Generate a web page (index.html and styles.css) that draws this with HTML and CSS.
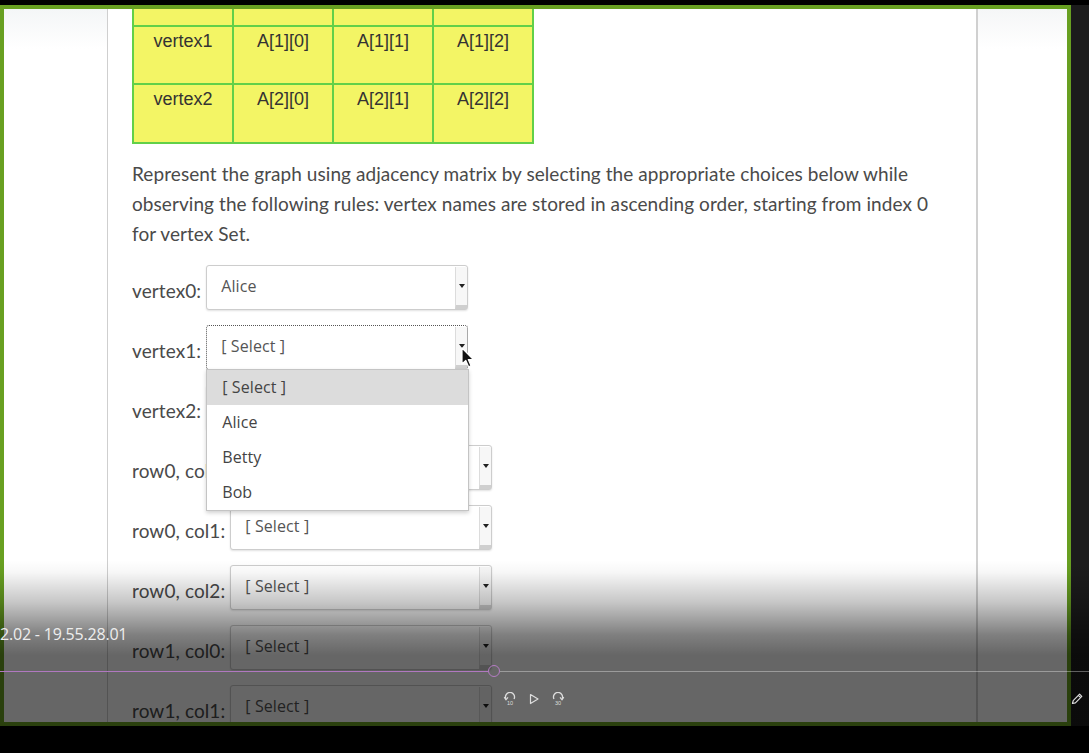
FILE: index.html
```html
<!DOCTYPE html>
<html lang="en">
<head>
<meta charset="utf-8">
<title>Adjacency matrix question</title>
<link rel="stylesheet" href="styles.css">
</head>
<body>
<div class="screen">
  <div class="frame">
    <div class="page">
      <div class="gutter"></div>
      <main class="content">
        <table class="matrix">
          <tr class="cut"><td></td><td></td><td></td><td></td></tr>
          <tr><td>vertex1</td><td>A[1][0]</td><td>A[1][1]</td><td>A[1][2]</td></tr>
          <tr><td>vertex2</td><td>A[2][0]</td><td>A[2][1]</td><td>A[2][2]</td></tr>
        </table>
        <p class="prompt">Represent the graph using adjacency matrix by selecting the appropriate choices below while observing the following rules: vertex names are stored in ascending order, starting from index 0 for vertex Set.</p>
        <div class="form">
          <div class="row"><span class="label">vertex0:</span><div class="select"><span class="value">Alice</span><span class="btn"><i class="tri"></i></span></div></div>
          <div class="row"><span class="label">vertex1:</span><div class="select focused"><span class="value">[ Select ]</span><span class="btn"><i class="tri"></i></span>
              <ul class="list">
                <li class="hl">[ Select ]</li>
                <li>Alice</li>
                <li>Betty</li>
                <li>Bob</li>
              </ul>
              <svg class="cursor" width="14" height="22" viewBox="0 0 14 22"><path d="M1 1 L1 17 L4.8 13.4 L7.6 19.8 L10 18.8 L7.3 12.5 L12.4 12.5 Z" fill="#111" stroke="#fff" stroke-width="1.2" stroke-linejoin="round"/></svg>
            </div></div>
          <div class="row"><span class="label">vertex2:</span><div class="select"><span class="value under">[ Select ]</span><span class="btn"><i class="tri"></i></span></div></div>
          <div class="row"><span class="label">row0, col0:</span><div class="select"><span class="value under">[ Select ]</span><span class="btn"><i class="tri"></i></span></div></div>
          <div class="row"><span class="label">row0, col1:</span><div class="select"><span class="value">[ Select ]</span><span class="btn"><i class="tri"></i></span></div></div>
          <div class="row"><span class="label">row0, col2:</span><div class="select"><span class="value">[ Select ]</span><span class="btn"><i class="tri"></i></span></div></div>
          <div class="row"><span class="label">row1, col0:</span><div class="select"><span class="value">[ Select ]</span><span class="btn"><i class="tri"></i></span></div></div>
          <div class="row"><span class="label">row1, col1:</span><div class="select"><span class="value">[ Select ]</span><span class="btn"><i class="tri"></i></span></div></div>
        </div>
      </main>
      <div class="gutter-right"></div>
    </div>
  </div>
  <div class="strip"></div>

  <div class="overlay">
    <div class="time">2.02 - 19.55.28.01</div>
    <div class="progress">
      <div class="played"></div>
      <div class="knob"></div>
      <div class="rest"></div>
    </div>
    <div class="controls">
      <svg class="ctl" width="14" height="14" viewBox="0 0 14 14"><path d="M3 7 A4.5 4.5 0 1 1 11 7" fill="none" stroke="#ddd" stroke-width="1.3"/><path d="M1.2 5.2 L3 7.8 L5 5.4" fill="none" stroke="#ddd" stroke-width="1.2"/><text x="7" y="13" font-size="5.5" text-anchor="middle" fill="#ddd" font-family="Liberation Sans, sans-serif">10</text></svg>
      <svg class="ctl" width="12" height="14" viewBox="0 0 12 14"><path d="M2.5 2.5 L10 7 L2.5 11.5 Z" fill="none" stroke="#ddd" stroke-width="1.2" stroke-linejoin="round"/></svg>
      <svg class="ctl" width="14" height="14" viewBox="0 0 14 14"><path d="M3 7 A4.5 4.5 0 1 1 11 7" fill="none" stroke="#ddd" stroke-width="1.3"/><path d="M9 5.4 L11 7.8 L12.8 5.2" fill="none" stroke="#ddd" stroke-width="1.2"/><text x="7" y="13" font-size="5.5" text-anchor="middle" fill="#ddd" font-family="Liberation Sans, sans-serif">30</text></svg>
    </div>
    <svg class="pencil" width="14" height="14" viewBox="0 0 14 14"><path d="M2.5 11.5 L3.2 8.6 L9.6 2.2 L11.8 4.4 L5.4 10.8 Z M8.4 3.4 L10.6 5.6" fill="none" stroke="#ddd" stroke-width="1.2" stroke-linejoin="round"/></svg>
  </div>
</div>
</body>
</html>
```

FILE: styles.css
```css
* { box-sizing: border-box; }

html, body {
  margin: 0;
  padding: 0;
  background: #000;
}

.screen {
  position: relative;
  width: 1089px;
  height: 753px;
  padding-top: 5px;
  display: flex;
  align-items: flex-start;
  overflow: hidden;
  background: #000;
}

.frame {
  width: 1071px;
  height: 721px;
  border: 4px solid #68a021;
  background: #fff;
  overflow: hidden;
}

.strip {
  width: 18px;
  height: 721px;
  background: #1c1c1c;
}

.page {
  display: flex;
  height: 100%;
}

.gutter {
  width: 104px;
  border-right: 1px solid #cfcfcf;
  background: linear-gradient(#f4f6f7, #fff 40px);
}

.content {
  width: 868px;
  padding-left: 24px;
}

.gutter-right {
  flex: 1;
  border-left: 2px solid #d0d0d0;
  background: linear-gradient(#f5f6f7, #fff 40px);
}

/* matrix table */
.matrix {
  border-collapse: collapse;
  border: 2px solid #5fcf45;
  border-top: none;
  background: #f3f565;
  font-family: "Liberation Sans", Arial, sans-serif;
  font-size: 18px;
  color: #333;
}

.matrix td {
  width: 100px;
  height: 58px;
  border: 2px solid #62d048;
  text-align: center;
  vertical-align: top;
  padding: 4px 0 0;
  line-height: 21px;
}

.matrix tr.cut td {
  height: 17px;
  border-top: none;
  padding: 0;
}

.matrix tr:last-child td {
  height: 59px;
}

/* prompt */
.prompt {
  margin: 15px 0 0;
  width: 810px;
  font-family: Lato, "Open Sans", sans-serif;
  font-size: 19px;
  letter-spacing: 0.07px;
  line-height: 30px;
  color: #4a4a4a;
}

/* form */
.form {
  margin-top: 16px;
  display: flex;
  flex-direction: column;
  gap: 15px;
}

.row {
  display: flex;
  align-items: center;
  gap: 5px;
  height: 45px;
}

.label {
  font-family: Lato, "Open Sans", sans-serif;
  font-size: 19px;
  letter-spacing: 0.1px;
  color: #4a4a4a;
  padding-top: 6px;
}

.select {
  position: relative;
  width: 262px;
  height: 45px;
  border: 1px solid #cdcdcd;
  border-radius: 3px;
  background: #fff;
  box-shadow: 0 1px 2px rgba(0, 0, 0, 0.12);
  display: flex;
  align-items: center;
}

.select.focused {
  border: 1px dotted #555;
  box-shadow: none;
}

.value {
  flex: 1;
  padding-left: 14px;
  padding-bottom: 4px;
  font-family: "Open Sans", "Noto Sans", sans-serif;
  font-size: 16px;
  letter-spacing: 0.1px;
  color: #555;
}

.value.under {
  visibility: hidden;
}

.btn {
  align-self: stretch;
  width: 12px;
  margin: 1px 0 0;
  border-left: 1px solid #dcdcdc;
  border-bottom: 4px solid #cfcfcf;
  background: #f7f7f7;
  display: flex;
  align-items: center;
  justify-content: center;
}

.tri {
  width: 0;
  height: 0;
  border-left: 3.5px solid transparent;
  border-right: 3.5px solid transparent;
  border-top: 4px solid #222;
}

/* open dropdown */
.list {
  position: absolute;
  left: -1px;
  top: 43px;
  width: 263px;
  margin: 0;
  padding: 0;
  list-style: none;
  background: #fff;
  border: 1px solid #c4c4c4;
  box-shadow: 0 2px 4px rgba(0, 0, 0, 0.18);
  z-index: 5;
}

.list li {
  height: 35px;
  line-height: 35px;
  padding-left: 15px;
  font-family: "Open Sans", "Noto Sans", sans-serif;
  font-size: 16px;
  letter-spacing: 0.1px;
  color: #444;
}

.list li.hl {
  background: #dcdcdc;
}

.cursor {
  position: absolute;
  left: 254px;
  top: 21px;
  z-index: 6;
}

/* video overlay */
.overlay {
  position: absolute;
  left: 0;
  top: 560px;
  width: 1089px;
  height: 166px;
  background: linear-gradient(rgba(0, 0, 0, 0) 0px, rgba(0, 0, 0, 0.03) 12px, rgba(0, 0, 0, 0.22) 42px, rgba(0, 0, 0, 0.5) 75px, rgba(0, 0, 0, 0.6) 95px, rgba(0, 0, 0, 0.6) 100%);
  z-index: 10;
}

.time {
  position: absolute;
  left: 0;
  top: 63px;
  font-family: "Open Sans", "Noto Sans", sans-serif;
  font-size: 16px;
  letter-spacing: -0.2px;
  color: #eee;
}

.progress {
  position: absolute;
  left: 0;
  top: 105px;
  width: 1089px;
  height: 12px;
  display: flex;
  align-items: center;
}

.played {
  width: 488px;
  height: 1px;
  background: #b078c0;
}

.knob {
  width: 12px;
  height: 12px;
  border: 1.5px solid #b57cc4;
  border-radius: 50%;
}

.rest {
  flex: 1;
  height: 1px;
  background: rgba(255, 255, 255, 0.35);
}

.controls {
  position: absolute;
  left: 503px;
  top: 132px;
  display: flex;
  align-items: center;
  gap: 11px;
}

.pencil {
  position: absolute;
  left: 1070px;
  top: 132px;
}
```
